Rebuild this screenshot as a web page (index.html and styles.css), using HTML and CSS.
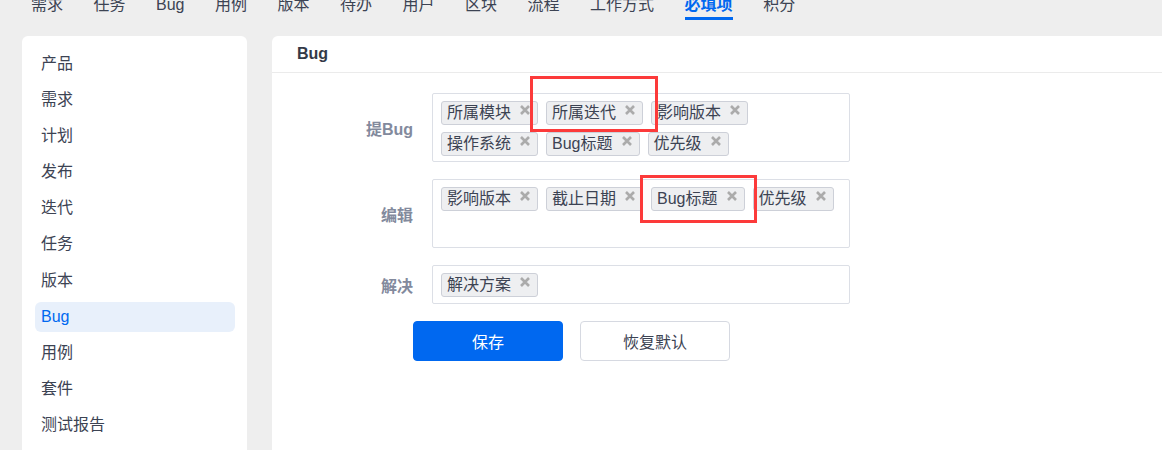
FILE: index.html
```html
<!DOCTYPE html>
<html lang="zh-CN">
<head>
<meta charset="utf-8">
<title>必填项 - Bug</title>
<link rel="stylesheet" href="styles.css">
</head>
<body>
<nav class="topnav">
  <a class="nav-item">需求</a>
  <a class="nav-item">任务</a>
  <a class="nav-item">Bug</a>
  <a class="nav-item">用例</a>
  <a class="nav-item">版本</a>
  <a class="nav-item">待办</a>
  <a class="nav-item">用户</a>
  <a class="nav-item">区块</a>
  <a class="nav-item">流程</a>
  <a class="nav-item">工作方式</a>
  <a class="nav-item nav-item-active">必填项</a>
  <a class="nav-item">积分</a>
</nav>
<div class="layout">
  <aside class="side-card">
    <ul class="side-menu">
      <li class="side-item">产品</li>
      <li class="side-item">需求</li>
      <li class="side-item">计划</li>
      <li class="side-item">发布</li>
      <li class="side-item">迭代</li>
      <li class="side-item">任务</li>
      <li class="side-item">版本</li>
      <li class="side-item side-item-active">Bug</li>
      <li class="side-item">用例</li>
      <li class="side-item">套件</li>
      <li class="side-item">测试报告</li>
    </ul>
  </aside>
  <section class="main-card">
    <div class="card-header">Bug</div>
    <div class="form">
      <div class="form-row">
        <div class="form-label">提Bug</div>
        <div class="tag-box tag-box-tall">
          <span class="tag">所属模块<svg class="tag-x" viewBox="0 0 10 10"><path d="M1 1L9 9M9 1L1 9"/></svg></span>
          <span class="tag">所属迭代<svg class="tag-x" viewBox="0 0 10 10"><path d="M1 1L9 9M9 1L1 9"/></svg></span>
          <span class="tag">影响版本<svg class="tag-x" viewBox="0 0 10 10"><path d="M1 1L9 9M9 1L1 9"/></svg></span>
          <span class="tag">操作系统<svg class="tag-x" viewBox="0 0 10 10"><path d="M1 1L9 9M9 1L1 9"/></svg></span>
          <span class="tag">Bug标题<svg class="tag-x" viewBox="0 0 10 10"><path d="M1 1L9 9M9 1L1 9"/></svg></span>
          <span class="tag">优先级<svg class="tag-x" viewBox="0 0 10 10"><path d="M1 1L9 9M9 1L1 9"/></svg></span>
        </div>
      </div>
      <div class="form-row">
        <div class="form-label">编辑</div>
        <div class="tag-box tag-box-tall">
          <span class="tag">影响版本<svg class="tag-x" viewBox="0 0 10 10"><path d="M1 1L9 9M9 1L1 9"/></svg></span>
          <span class="tag">截止日期<svg class="tag-x" viewBox="0 0 10 10"><path d="M1 1L9 9M9 1L1 9"/></svg></span>
          <span class="tag">Bug标题<svg class="tag-x" viewBox="0 0 10 10"><path d="M1 1L9 9M9 1L1 9"/></svg></span>
          <span class="tag">优先级<svg class="tag-x" viewBox="0 0 10 10"><path d="M1 1L9 9M9 1L1 9"/></svg></span>
        </div>
      </div>
      <div class="form-row">
        <div class="form-label">解决</div>
        <div class="tag-box">
          <span class="tag">解决方案<svg class="tag-x" viewBox="0 0 10 10"><path d="M1 1L9 9M9 1L1 9"/></svg></span>
        </div>
      </div>
      <div class="form-actions">
        <button class="btn btn-primary">保存</button>
        <button class="btn btn-default">恢复默认</button>
      </div>
    </div>
  </section>
</div>
<div class="mark mark-one"></div>
<div class="mark mark-two"></div>
</body>
</html>
```

FILE: styles.css
```css
* {
  box-sizing: border-box;
}

html,
body {
  margin: 0;
  padding: 0;
}

body {
  width: 1162px;
  height: 450px;
  overflow: hidden;
  background: #eeeeee;
  font-family: "Liberation Sans", "Noto Sans CJK SC", sans-serif;
  font-size: 16px;
  color: #3c4353;
  position: relative;
}

/* top navigation */
.topnav {
  display: flex;
  align-items: flex-start;
  gap: 30.5px;
  height: 42px;
  margin-top: -6px;
  padding-left: 31px;
}

.nav-item {
  display: block;
  line-height: 22px;
  padding-bottom: 1px;
  border-bottom: 3px solid transparent;
  color: #3c4353;
  white-space: nowrap;
}

.nav-item-active {
  color: #0068f0;
  font-weight: bold;
  border-bottom-color: #0068f0;
}

/* page layout */
.layout {
  display: flex;
  gap: 25px;
  padding-left: 22px;
  height: 420px;
}

.side-card {
  width: 225px;
  flex: none;
  background: #ffffff;
  border-radius: 6px 6px 0 0;
  padding: 12.5px 12px 0 13px;
}

.side-menu {
  list-style: none;
  margin: 0;
  padding: 0;
  display: flex;
  flex-direction: column;
  gap: 6.2px;
}

.side-item {
  height: 30px;
  line-height: 30px;
  padding: 0 6px;
  border-radius: 6px;
  color: #3c4353;
}

.side-item-active {
  background: #e8f0fb;
  color: #0068f0;
}

.main-card {
  flex: 1;
  background: #ffffff;
  border-radius: 6px 0 0 0;
}

.card-header {
  height: 37px;
  line-height: 36px;
  padding: 0 25px;
  font-weight: bold;
  color: #333a47;
  border-bottom: 1px solid #ebebeb;
}

.form {
  display: flex;
  flex-direction: column;
  gap: 17px;
  padding-top: 20px;
}

.form-row {
  display: grid;
  grid-template-columns: 141px 418px;
  column-gap: 19px;
  align-items: center;
}

.form-label {
  text-align: right;
  font-weight: bold;
  color: #838a9d;
}

.tag-box {
  display: flex;
  flex-wrap: wrap;
  align-content: flex-start;
  gap: 7px 8px;
  min-height: 39px;
  border: 1px solid #dcdfe6;
  border-radius: 2px;
  padding: 7px 8px 5px;
}

.tag-box-tall {
  min-height: 69px;
}

.tag {
  display: inline-flex;
  align-items: flex-start;
  height: 24px;
  line-height: 22px;
  padding: 0 7px 0 5px;
  border: 1px solid #cdd0d8;
  border-radius: 3px;
  background: #eeeff1;
  color: #3c4353;
  white-space: nowrap;
}

.tag-x {
  width: 10px;
  height: 10px;
  margin: 3px 0 0 9px;
  fill: none;
  stroke: #ababab;
  stroke-width: 2.6;
  stroke-linecap: butt;
}

.form-actions {
  display: flex;
  gap: 17px;
  padding-left: 141px;
}

.btn {
  height: 40px;
  border-radius: 4px;
  font-family: inherit;
  font-size: 16px;
  cursor: pointer;
}

.btn-primary {
  width: 150px;
  background: #0068f0;
  border: 1px solid #0068f0;
  color: #ffffff;
}

.btn-default {
  width: 150px;
  background: #ffffff;
  border: 1px solid #d6d9e1;
  color: #3c4353;
}

/* annotation overlays */
.mark {
  position: absolute;
  border: 3px solid #fc3a3a;
  pointer-events: none;
}

.mark-one {
  left: 530px;
  top: 76px;
  width: 128px;
  height: 56px;
}

.mark-two {
  left: 640px;
  top: 175px;
  width: 117px;
  height: 48px;
}
```
